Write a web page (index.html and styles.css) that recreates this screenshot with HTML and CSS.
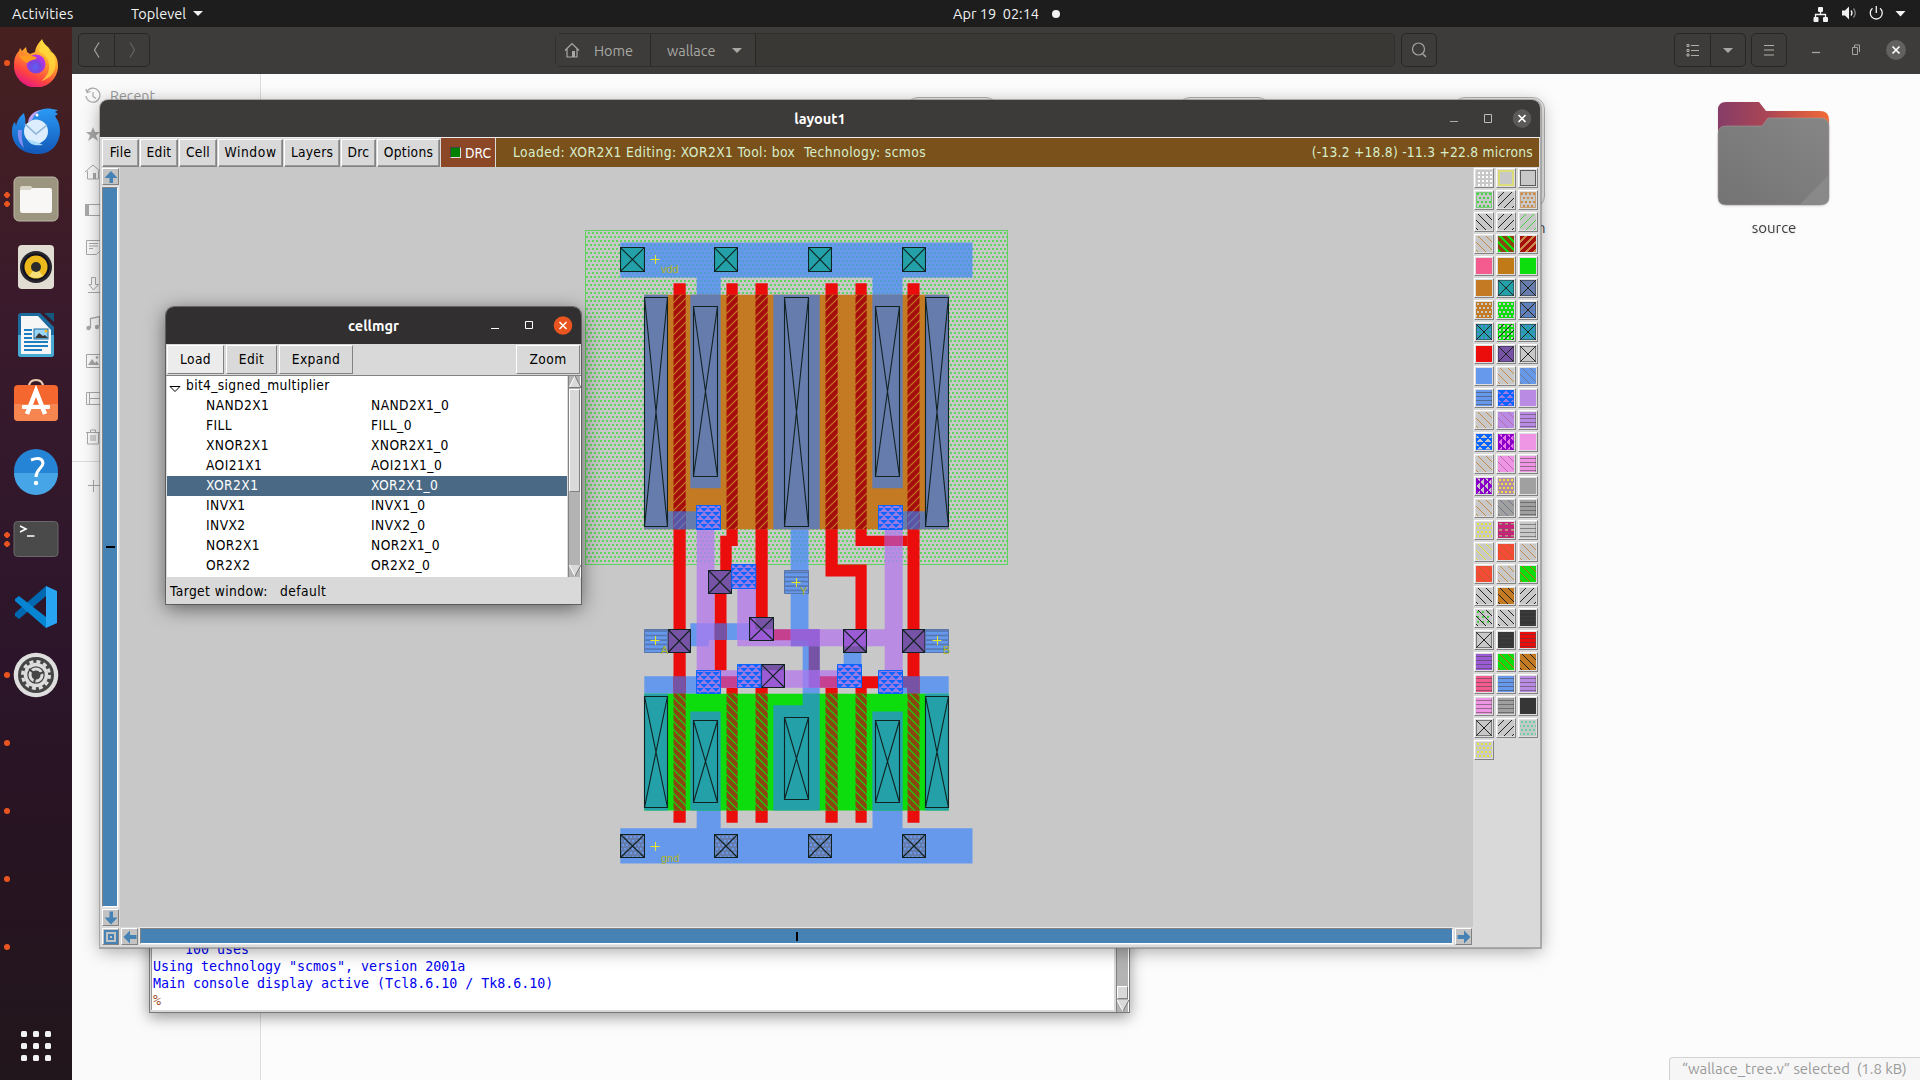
FILE: index.html
```html
<!DOCTYPE html>
<html lang="en">
<head>
<meta charset="utf-8">
<title>layout1</title>
<link rel="stylesheet" href="styles.css">
</head>
<body>
<div class="desktop">
  <header class="topbar">
    <div class="topbar-left"><span class="activities">Activities</span><span class="appmenu">Toplevel</span><i class="caret"></i></div>
    <div class="clock"><span>Apr 19&nbsp; 02:14</span><i></i></div>
    <svg class="tray" width="90" height="27" viewBox="1815 0 90 27">
      <g fill="#f2f2f2"><rect x="1818" y="7" width="5" height="5" rx="1"/><rect x="1813" y="17" width="5" height="5" rx="1" transform="translate(0.5 0)"/><rect x="1823" y="17" width="5" height="5" rx="1"/><path d="M1842 10.500h3l4-4v13l-4-4h-3z"/><path d="M1895.500 11h10l-5 5.500z"/></g>
      <path d="M1820.500 12v3M1815.500 18v-3.500h10v3.500M1851 10.500q2 2.500 0 5M1872.500 8.300a6 6 0 1 0 7.500 0M1876.300 6v7" fill="none" stroke="#f2f2f2" stroke-width="1.300"/>
      <path d="M1853.500 8.500q3.500 4.500 0 9" fill="none" stroke="#888" stroke-width="1.300"/>
    </svg>
  </header>

  <div class="workspace">
    <nav class="dock">
      <div class="dock-item"><b class="run"></b>
        <svg width="48" height="48" viewBox="0 0 48 48"><defs><linearGradient id="ff" x1=".8" y1="0" x2=".3" y2="1"><stop offset="0" stop-color="#fff04a"/><stop offset=".4" stop-color="#ffa02a"/><stop offset=".75" stop-color="#ff4540"/><stop offset="1" stop-color="#e31587"/></linearGradient><radialGradient id="fp" cx=".45" cy=".65"><stop offset="0" stop-color="#5b62f5"/><stop offset=".6" stop-color="#7a44dd"/><stop offset="1" stop-color="#b833e1"/></radialGradient></defs>
          <path d="M2 26c0-7 2-11 5-14l1-3 2 3 4-4 1 5 3 2 5-2c1-7 5-10 7-13 1 4 4 6 7 9l1 4 3 1c4 4 5 8 5 14a22 21.500 0 0 1-44-2z" fill="url(#ff)"/>
          <path d="M31 3c2 4 9 7 11 14 5 13-3 23-13 25 12-8 10-23 0-28-3-2-2-7 2-11z" fill="#ffdc3e" opacity=".75"/><circle cx="24" cy="25" r="9.500" fill="url(#fp)"/><path d="M7 15c3 3 8 1 11 2 4 0 8 1 6 3-5 2-7 1-8 4-4-1-8-4-9-9z" fill="#ff9a20"/></svg></div>
      <div class="dock-item">
        <svg width="48" height="48" viewBox="0 0 48 48"><defs><linearGradient id="tb" x1="0" y1="0" x2="0" y2="1"><stop offset="0" stop-color="#2b9af5"/><stop offset="1" stop-color="#1258b8"/></linearGradient></defs>
          <path d="M18 14C21 4 32 0 40 2l6 1-3 2 3 2-3 2c4 6 5 10 5 16-1 13-9 22-22 22C10 47 0 38 0 25c0-6 1-8 3-10l1 4c1-5 3-9 8-13 1 5 2 6 1 12z" fill="url(#tb)"/><path d="M16 15c1-7 7-12 14-12-6 2-8 6-10 10z" fill="#b9a1f5"/><path d="M6 23c-1 9 2 14 6 18-1-4-3-10-2-18z" fill="#7f8ef0"/><circle cx="25" cy="8" r="1.500" fill="#fff"/><circle cx="24" cy="24.500" r="12" fill="#dceefd"/><path d="M13 17l11 10 11-9" fill="none" stroke="#8ab0d8" stroke-width="1.500"/><path d="M15 32c3 6 8 7 16 6l-6-3z" fill="#a9dcfa"/></svg></div>
      <div class="dock-item"><b class="run two"></b>
        <svg width="48" height="48" viewBox="0 0 48 48"><rect x="2" y="2" width="44" height="44" rx="5" fill="#9c9680" stroke="#bdb8a6"/><path d="M8 13q0-2 2-2h9l3 4h17v6H8z" fill="#d8d4c7"/><rect x="8" y="15" width="32" height="23" rx="2.500" fill="#f8f7f5"/><path d="M8 20v-4q0-1 3-1h7l3-2h17q2 0 2 3" fill="#f8f7f5"/></svg></div>
      <div class="dock-item">
        <svg width="48" height="48" viewBox="0 0 48 48"><rect x="6" y="2" width="36" height="44" rx="4" fill="#e2ddd2"/><circle cx="24" cy="24" r="16" fill="#28272e"/><circle cx="24" cy="24" r="13.500" fill="#111020"/><circle cx="24" cy="24" r="11.500" fill="#ecb91c"/><path d="M24 24l-7 9q7 4 14 0z" fill="#f7df78"/><circle cx="24" cy="24" r="5" fill="#2c2c2c"/></svg></div>
      <div class="dock-item">
        <svg width="48" height="48" viewBox="0 0 48 48"><path d="M6 5q0-3 3-3h19l14 14v27q0 3-3 3H9q-3 0-3-3z" fill="#1c6b9f"/><path d="M6 24h36v19q0 3-3 3H9q-3 0-3-3z" fill="#48a9d5"/><path d="M32 2h10v9z" fill="#15587f"/><path d="M9 5h17l13 14v24H9z" fill="#f6f6f6"/><path d="M12 19h8M12 23h8M12 27h8M12 31h24M12 35h24M12 39h18" stroke="#1a7fc0" stroke-width="1.800"/><rect x="22" y="18" width="14" height="10" fill="#9ad5f5" stroke="#1c6b9f"/><path d="M23 27l4-5 4 3 2-1 3 3z" fill="#373737"/><circle cx="34" cy="20" r="1.500" fill="#f5b71c"/></svg></div>
      <div class="dock-item">
        <svg width="48" height="48" viewBox="0 0 48 48"><path d="M17 8q0-7 7-7t7 7" fill="none" stroke="#eccfb0" stroke-width="2"/><rect x="2" y="6" width="44" height="36" rx="4" fill="#f4672e"/><path d="M2 25h44v13q0 4-4 4H6q-4 0-4-4z" fill="#f6854f"/><path d="M15 35l9-23 9 23" fill="none" stroke="#fff" stroke-width="4.500"/><rect x="10" y="26" width="28" height="4" rx="1" fill="#fff"/></svg></div>
      <div class="dock-item">
        <svg width="48" height="48" viewBox="0 0 48 48"><circle cx="24" cy="24" r="22" fill="#2584d6"/><path d="M2 26a22 22 0 0 0 44 0z" fill="#45a5e6"/><path d="M19 13q11-4 12 3c0 5-7 6-7 14" fill="none" stroke="#fff" stroke-width="3"/><circle cx="24" cy="36" r="2.200" fill="#fff"/></svg></div>
      <div class="dock-item"><b class="run two"></b>
        <svg width="48" height="48" viewBox="0 0 48 48"><rect x="2" y="6.500" width="44" height="35" rx="3.500" fill="#4a4a4a" stroke="#686868"/><path d="M8 11l6 3-6 3M15 21h7.500" fill="none" stroke="#fff" stroke-width="1.600"/></svg></div>
      <div class="dock-item">
        <svg width="48" height="48" viewBox="0 0 48 48"><path d="M34 3l11 5v32l-11 5z" fill="#27a5f2"/><path d="M34 3v10L7 36l-4-3v-3z" fill="#0068b0"/><path d="M34 45V34L7 13l-4 3v2z" fill="#0785d2"/></svg></div>
      <div class="dock-item"><b class="run"></b>
        <svg width="48" height="48" viewBox="0 0 48 48"><circle cx="24" cy="24" r="22.300" fill="#dedede"/><circle cx="24" cy="24" r="18" fill="#454545"/><circle cx="24" cy="24" r="13.500" fill="none" stroke="#ddd" stroke-width="3" stroke-dasharray="4 3.070"/><circle cx="24" cy="24" r="10.500" fill="none" stroke="#ddd" stroke-width="3.500"/><circle cx="24" cy="24" r="6" fill="none" stroke="#ddd" stroke-width="3"/><path d="M24 24l-7-6M24 24l8-3M24 24l-2 8" stroke="#454545" stroke-width="2"/><circle cx="24" cy="24" r="4" fill="#454545"/></svg></div>
      <div class="dock-item"><b class="run"></b></div>
      <div class="dock-item"><b class="run"></b></div>
      <div class="dock-item"><b class="run"></b></div>
      <div class="dock-item"><b class="run"></b></div>
      <div class="apps"><i></i><i></i><i></i><i></i><i></i><i></i><i></i><i></i><i></i></div>
    </nav>

    <main class="files">
      <div class="files-head">
        <div class="btns"><span class="hb"><svg width="10" height="16"><path d="M7 0.500L2.500 8 7 15.500" fill="none" stroke="#a5a4a0" stroke-width="1.200"/></svg></span><span class="hb"><svg width="10" height="16"><path d="M3 0.500L7.500 8 3 15.500" fill="none" stroke="#64635f" stroke-width="1.200"/></svg></span></div>
        <div class="path">
          <span class="crumb home"><svg width="16" height="16"><path d="M1 8.500L8 1.500l7 7M3 7v8h10V7" fill="none" stroke="#a9a8a4" stroke-width="1.200"/><rect x="8" y="9" width="3" height="6" fill="#a9a8a4"/></svg>Home</span>
          <span class="crumb wal">wallace<i class="caret dim"></i></span>
        </div>
        <div class="btns search"><span class="hb"><svg width="16" height="16"><circle cx="7.500" cy="7" r="6" fill="none" stroke="#a5a4a0" stroke-width="1.200"/><path d="M12 12l3 3" stroke="#a5a4a0" stroke-width="1.500"/></svg></span></div>
        <div class="btns list"><span class="hb"><svg width="14" height="14"><path d="M5 2.500h8M5 7.500h8M5 12.500h8" stroke="#b0afab" stroke-width="1.200"/><path d="M1 1.500h2v2H1zM1 6.500h2v2H1zM1 11h2v2H1z" fill="none" stroke="#b0afab"/></svg></span><span class="hb"><i class="caret dim"></i></span></div>
        <div class="btns menu"><span class="hb"><svg width="12" height="12"><path d="M1 1.500h10M1 6h10M1 11h10" stroke="#b0afab" stroke-width="1.200"/></svg></span></div>
        <div class="wc"><svg width="104" height="24" viewBox="0 0 104 24"><path d="M6 14.500h8" stroke="#a5a4a0" stroke-width="1.300"/><path d="M46.500 9.500h5v7h-5zM48.500 9V7h5v7" fill="none" stroke="#a5a4a0"/><circle cx="90" cy="12" r="10" fill="#62615f"/><path d="M86.500 8.500l7 7M93.500 8.500l-7 7" stroke="#fff" stroke-width="1.700"/></svg></div>
      </div>
      <div class="files-body">
        <aside class="side">
          <div class="place"><svg width="18" height="18"><path d="M3 4.500A7 7 0 1 1 2 9M2 2l1 3.500 3.500-1M9 5v4.500l3 2" fill="none" stroke="#a8a8a8" stroke-width="1.200"/></svg><span>Recent</span></div>
          <div class="place"><svg width="18" height="18"><path d="M9 2l2 5h5l-4 3.500L14 16l-5-3.500L4 16l2-5.500L2 7h5z" fill="#a8a8a8"/></svg></div>
          <div class="place"><svg width="18" height="18"><path d="M1 9l8-7 8 7M3.500 8v8h11V8" fill="none" stroke="#a8a8a8"/><rect x="9" y="10" width="3" height="6" fill="#a8a8a8"/></svg></div>
          <div class="place"><svg width="18" height="18"><path d="M1.500 3.500h16v11h-16z" fill="none" stroke="#a8a8a8"/><path d="M1 3h4v12H1z" fill="#a8a8a8"/></svg></div>
          <div class="place"><svg width="18" height="18"><path d="M2.500 1.500h14v10l-4 4h-10zM5 4.500h9M5 7h9M5 9.500h4" fill="none" stroke="#a8a8a8"/></svg></div>
          <div class="place"><svg width="18" height="18"><path d="M7.500 1.500h4v7h3L9.500 14 5 8.500h2.500zM4 16.500h12" fill="none" stroke="#a8a8a8"/></svg></div>
          <div class="place"><svg width="18" height="18"><path d="M6.500 14V4.500l9-2V12" fill="none" stroke="#a8a8a8" stroke-width="1.300"/><circle cx="4.500" cy="14" r="2.200" fill="#a8a8a8"/><circle cx="13" cy="13" r="2.200" fill="#a8a8a8"/></svg></div>
          <div class="place"><svg width="18" height="18"><path d="M2.500 2.500h15v13h-15z" fill="none" stroke="#a8a8a8"/><path d="M4 13l4-6 3 4 2-2 2 4z" fill="#a8a8a8"/><circle cx="13" cy="5.500" r="1.300" fill="#a8a8a8"/></svg></div>
          <div class="place"><svg width="18" height="18"><path d="M2.500 2.500h15v12h-15zM5.500 2v13M5 8.500h12" fill="none" stroke="#a8a8a8"/></svg></div>
          <div class="place"><svg width="18" height="18"><path d="M2 4.500h14M6.500 4V2h5v2M3.500 5v11h11V5M7 7v6M9 7v6M11 7v6" fill="none" stroke="#a8a8a8"/></svg></div>
          <div class="place other"><svg width="18" height="18"><path d="M4 9.500h12M9.500 4v12" stroke="#a8a8a8"/></svg></div>
        </aside>
        <section class="grid">
          <i class="thumb t1"></i><i class="thumb t2"></i><i class="thumb t3"></i><span class="hname">h</span>
          <figure class="folder">
            <svg width="114" height="108" viewBox="0 0 114 108"><defs><linearGradient id="fo"><stop offset="0" stop-color="#863d68"/><stop offset=".45" stop-color="#ab4554"/><stop offset="1" stop-color="#f26a36"/></linearGradient><linearGradient id="fg" x1="0" y1="1" x2="1" y2="0"><stop offset="0" stop-color="#737373"/><stop offset="1" stop-color="#868686"/></linearGradient></defs>
              <path d="M1 9q0-8 8-8h33l7 9h54q9 0 9 9v40H1z" fill="url(#fo)"/><path d="M1 33q0-8 8-8h36l6-8h52q9 0 9 8v71q0 8-9 8H9q-8 0-8-8z" fill="url(#fg)" stroke="#a59a99" stroke-width=".600"/><path d="M83 103.500l29-30v22q0 8-9 8z" fill="#898989"/></svg>
            <figcaption>source</figcaption>
          </figure>
          <div class="status">“wallace_tree.v” selected&nbsp; (1.8 kB)</div>
        </section>
      </div>
    </main>
  </div>

  <div class="win console">
    <pre>    100 uses
Using technology "scmos", version 2001a
Main console display active (Tcl8.6.10 / Tk8.6.10)
<em>%</em></pre>
    <div class="tk-scroll"><span class="grow"></span><span class="knob"></span><svg width="12" height="12"><path d="M0 0h12L6 11.500z" fill="#d9d9d9"/><path d="M0 0l6 11" stroke="#fff"/><path d="M12 0L6 11" stroke="#777"/></svg></div>
  </div>

  <div class="win layout">
    <div class="title"><span>layout1</span><svg width="90" height="24" viewBox="0 0 90 24"><path d="M0 14.500h8" stroke="#aaa"/><path d="M34.500 7.500h7v8h-7z" fill="none" stroke="#bbb"/><circle cx="72" cy="11.500" r="9.300" fill="#5b5a58"/><path d="M68.500 8l7 7M75.500 8l-7 7" stroke="#fff" stroke-width="1.700"/></svg></div>
    <div class="menubar">
      <span class="mb w37">File</span><span class="mb w38">Edit</span><span class="mb w38">Cell</span><span class="mb w65">Window</span><span class="mb w56">Layers</span><span class="mb w35">Drc</span><span class="mb w63">Options</span>
      <span class="drc"><i></i>DRC</span>
      <span class="info"><span>Loaded: XOR2X1 Editing: XOR2X1 Tool: box&nbsp; Technology: scmos</span><span class="coords">(-13.2 +18.8) -11.3 +22.8 microns</span></span>
    </div>
    <div class="work">
      <div class="view">
        <div class="vbar">
          <span class="ab"><svg width="14" height="14"><path d="M7 1l6.500 7H9v5H5.500V8H.5z" fill="#4682b4"/></svg></span>
          <span class="trough v"><i></i></span>
          <span class="ab"><svg width="14" height="14"><path d="M7 13.500l6.500-7H9V.5H5.500v6H.5z" fill="#4682b4"/></svg></span>
        </div>
        <svg class="canvas" width="1353" height="760" viewBox="120 167 1353 760">
          <defs>
            <pattern id="well" width="4" height="8" patternUnits="userSpaceOnUse"><path d="M0 0h2v2H0zM2 4h2v2H2z" fill="#5fd35f"/></pattern>
            <pattern id="wellb" width="4" height="8" patternUnits="userSpaceOnUse"><path d="M0 0h2v2H0zM2 4h2v2H2z" fill="#45a0b8" opacity=".6"/></pattern>
            <pattern id="dotb" width="4" height="8" patternUnits="userSpaceOnUse"><path d="M0 0h2v2H0zM2 4h2v2H2z" fill="#6699eb"/></pattern>
            <pattern id="hp" width="8" height="8" patternUnits="userSpaceOnUse"><rect width="8" height="8" fill="#a60d0d"/><path d="M-2 2l4-4M0 8l8-8M6 10l4-4" stroke="#c47a22" stroke-width="1.200"/></pattern>
            <pattern id="hn" width="8" height="8" patternUnits="userSpaceOnUse"><rect width="8" height="8" fill="#8a4510"/><path d="M-2 6l4 4M0 0l8 8M6-2l4 4" stroke="#0ddd0d" stroke-width="1.200"/></pattern>
            <pattern id="hm" width="8" height="8" patternUnits="userSpaceOnUse"><path d="M-2 2l4-4M0 8l8-8M6 10l4-4" stroke="#6a7cac" stroke-width="1.200"/></pattern>
            <pattern id="via" width="8" height="8" patternUnits="userSpaceOnUse"><rect width="8" height="8" fill="#9a7be6"/><path d="M.3 0h7.400L4 3.800zM4.300 4h7.400L8 7.800zM-3.700 4h7.400L0 7.800z" fill="#0a64ff"/></pattern>
            <pattern id="hl" width="10" height="4.500" patternUnits="userSpaceOnUse"><path d="M0 1h10" stroke="#4a5f8c" stroke-width="1"/></pattern>
            <symbol id="cx" viewBox="0 0 24 24" preserveAspectRatio="none"><path d="M.5.5h23v23H.5zM.5.5l23 23M23.500.5l-23 23" fill="none" stroke="#122" stroke-width="1.100" vector-effect="non-scaling-stroke"/></symbol>
          </defs>
          <rect x="585.500" y="230.500" width="422" height="334" fill="url(#well)" stroke="#5fd35f"/>
          <g fill="#6699eb">
            <path d="M620.300 242.500h352.200v35h-70v18h-30v-18h-151.800v18h-24v-18h-76.400z"/>
            <path d="M620.300 863.500h352.200v-35.200h-70v-18.300h-30v18.300h-151.800v-18.300h-24v18.300h-76.400z"/>
            <path d="M790.700 529h17.800v100.500h11.200v64.500h-17v-48h-12z"/>
            <path d="M690.300 623.300h60v16.700h-41.500v6.300h-18.500zM843.700 652h17.800v13h-17.800zM644.300 676.300h52v17.400h-52zM902.700 676.300h46v17.400h-46z"/>
          </g>
          <g fill="url(#wellb)"><path d="M620.300 242.500h352.200v35h-70v18h-30v-18h-151.800v18h-24v-18h-76.400z"/><path d="M790.700 529h17.800v35h-17.800z"/></g>
          <g fill="#eb0c0c">
            <path d="M673.500 283.300h12.200v411h-12.200zM726.500 283.300h11.200v12h-11.200zM755.500 283.300h12.200v12h-12.200zM825.500 283.300h12.200v12h-12.200zM855.500 283.300h11.200v12h-11.200zM907.500 283.300h12v411h-12z"/>
            <path d="M726.500 529h11.200v17h-6v32h-11.400v-42.300h6.200zM714.500 590h12v86h11.200v18h-11.200v-6h-12zM755.500 529h12.200v90h-12.200zM755.500 687h12.200v7h-12.200z"/>
            <path d="M825.500 529h12.200v35.500h29v66h-11.200v-54h-30zM855.500 529h11.200v6.700h41v10.300h-52.200zM825.500 687h12.200v7h-12.200zM855.500 687h11.200v7h-11.200zM860 676.300h19v12h-19z"/>
            <path d="M673.500 810h12.200v12.700h-12.200zM726.500 810h11.200v12.700h-11.200zM755.500 810h12.200v12.700h-12.200zM825.500 810h12.200v12.700h-12.200zM855.500 810h11.200v12.700h-11.200zM907.500 810h12v12.700h-12z"/>
          </g>
          <g fill="#b98be3">
            <path d="M696.700 529h17.800v142h-17.800zM884.700 529h18v142h-18zM737.300 588h18.400v41.300h129v17h-147.400zM720 670.300h117.700v17.400h-117.700z"/>
          </g>
          <g fill="url(#wellb)" opacity=".35"><path d="M696.700 529h17.800v35h-17.800zM884.700 529h18v35h-18z"/></g>
          <g fill="#9680ee"><path d="M696.700 623.300h17.800v16.700h-5.700v6.300h-12.100zM737.300 623.300h18v16.700h-18zM802.700 670.300h17v17.400h-17z" opacity=".9"/></g>
          <path d="M790.700 629.300h29v17h-29z" fill="#8c6bdc"/>
          <g fill="#c64090"><path d="M773.700 629.300h17v11h-17zM720 676.300h18v11.400h-18zM819.700 676.300h18v11.400h-18zM884.700 535.700h18v10.300h-18z"/></g>
          <g fill="#7753a5"><path d="M714.500 623.300h12v16.700h-12zM808.700 646.300h11v24h-11zM673.500 676.300h12.200v17.400h-12.200zM902.700 676.300h16.800v17.400h-12v-6h-4.800z"/></g>
          <path d="M790.700 629.300h29v17h-11v-6h-18zM808.700 670.300h11v17.400h-11z" fill="#9a5bd4" opacity=".7"/>
          <!-- p diffusion and its transistors -->
          <path d="M644.300 294.700h304.400v234.600h-304.400z" fill="#c47a22"/>
          <path d="M644.300 294.700h23.400v216.600h29v18h-52.400zM690.300 294.700h30.400v193.600h-30.400zM773.300 294.700h46.400v234.600h-46.400zM872.300 294.700h30.400v193.600h-30.400zM925.300 294.700h23.400v234.600h-46v-18h22.600z" fill="#667cac"/>
          <path d="M673.500 294.700h12.200v234.600h-12.200zM726.500 294.700h11.200v234.600h-11.200zM755.500 294.700h12.200v234.600h-12.200zM825.500 294.700h12.200v234.600h-12.200zM855.500 294.700h11.200v234.600h-11.200zM907.500 294.700h12v234.600h-12z" fill="url(#hp)"/>
          <g fill="#5b54a6"><path d="M673.500 511.300h12.200v18h-12.200zM907.500 511.300h12v18h-12z"/></g>
          <g fill="url(#hm)"><path d="M673.500 511.300h12.200v18h-12.200zM907.500 511.300h12v18h-12z"/></g>
          <g fill="none" stroke="#122" stroke-width="1.100">
            <path d="M644.500 297.500h23v229h-23zl23 229m0-229l-23 229M784.500 297.500h24v229h-24zl24 229m0-229l-24 229M925.500 297.500h23v229h-23zl23 229m0-229l-23 229"/>
            <path d="M693.500 306.500h24v170h-24zl24 170m0-170l-24 170M875.500 306.500h24v170h-24zl24 170m0-170l-24 170"/>
          </g>
          <!-- n diffusion and its transistors -->
          <path d="M644.300 693.700h304.400v116.800h-304.400z" fill="#0ddd0d"/>
          <path d="M644.300 693.700h23.400v116.800h-23.400zM690.300 711.500h30.400v99h-30.400zM773.300 705.300h29.400v-11.600h17v116.800h-46.400zM872.300 711.500h30.400v99h-30.400zM925.300 693.700h23.400v116.800h-23.400z" fill="#23a0a8"/>
          <path d="M673.500 693.700h12.200v116.800h-12.200zM726.500 693.700h11.200v116.800h-11.200zM755.500 693.700h12.200v116.800h-12.200zM825.500 693.700h12.200v116.800h-12.200zM855.500 693.700h11.200v116.800h-11.200zM907.500 693.700h12v116.800h-12z" fill="url(#hn)"/>
          <g fill="none" stroke="#122" stroke-width="1.100">
            <path d="M644.500 696.500h23v111h-23zl23 111m0-111l-23 111M925.500 696.500h23v111h-23zl23 111m0-111l-23 111"/>
            <path d="M693.500 720.500h24v82h-24zl24 82m0-82l-24 82M875.500 720.500h24v82h-24zl24 82m0-82l-24 82M784.500 717.500h24v82h-24zl24 82m0-82l-24 82"/>
          </g>
          <!-- substrate and well taps -->
          <path d="M620.300 247.300h24.400v24.400h-24.400zM714 247.300h24v24.400h-24zM808.300 247.300h23.700v24.400h-23.700zM902.300 247.300h23.700v24.400h-23.700z" fill="#23a0a8"/>
          <use href="#cx" x="620" y="247" width="25" height="25"/><use href="#cx" x="714" y="247" width="24" height="25"/><use href="#cx" x="808" y="247" width="24" height="25"/><use href="#cx" x="902" y="247" width="24" height="25"/>
          <path d="M620.300 834.300h24.400v23.400h-24.400zM714 834.300h24v23.400h-24zM808.300 834.300h23.700v23.400h-23.700zM902.300 834.300h23.700v23.400h-23.700z" fill="#667cac"/>
          <path d="M620.300 834.300h24.400v23.400h-24.400zM714 834.300h24v23.400h-24zM808.300 834.300h23.700v23.400h-23.700zM902.300 834.300h23.700v23.400h-23.700z" fill="url(#dotb)"/>
          <use href="#cx" x="620" y="834" width="25" height="24"/><use href="#cx" x="714" y="834" width="24" height="24"/><use href="#cx" x="808" y="834" width="24" height="24"/><use href="#cx" x="902" y="834" width="24" height="24"/>
          <!-- poly contacts -->
          <path d="M708 570h24v24h-24zM749 617h25v24h-25zM667.500 629h23.500v24h-23.500zM843 629h24v24h-24zM902 629h23.500v24h-23.500zM761 664h24v24h-24z" fill="#7753a5"/>
          <path d="M749 629.300h25v11.700h-25zM749 617h6.500v13h-6.500zM843 629h24v17.300h-24zM761 670.300h24v17.700h-24z" fill="#9a5bd4"/>
          <use href="#cx" x="708" y="570" width="24" height="24"/><use href="#cx" x="749" y="617" width="25" height="24"/><use href="#cx" x="667.500" y="629" width="23.500" height="24"/><use href="#cx" x="843" y="629" width="24" height="24"/><use href="#cx" x="902" y="629" width="23.500" height="24"/><use href="#cx" x="761" y="664" width="24" height="24"/>
          <!-- pins -->
          <path d="M644.500 629.500h23v23h-23zM925.500 629.500h23v23h-23zM784.500 570.500h24v23h-24z" fill="#6699eb"/>
          <path d="M644.500 629.500h23v23h-23zM925.500 629.500h23v23h-23zM784.500 570.500h24v23h-24z" fill="url(#hl)" stroke="#5a75a8"/>
          <!-- vias -->
          <path d="M696.500 505.500h24v24h-24zM878.500 505.500h24v24h-24zM731.700 564.500h24v24h-24zM696.500 670.500h24v23h-24zM737.500 664.500h23.500v23h-23.500zM837.500 664.500h24v23h-24zM878.500 670.500h24v23h-24z" fill="url(#via)" stroke="#0a64ff"/>
          <path d="M650.500 259.500h9M655.500 255v9M650.500 846.500h9M655.500 842v9M650.500 640.500h9M655.500 636v9M932.500 640.500h9M937.500 636v9M791.500 582.500h9M796.500 578v9" stroke="#e8e82a"/>
          <g class="lbl"><text x="661" y="273">vdd</text><text x="661" y="862">gnd</text><text x="661" y="654">A</text><text x="943" y="654">B</text><text x="800" y="595">Y</text></g>
        </svg>
        <span class="ab zc"><svg width="14" height="14"><path d="M1 1h12v12H1zM5 5h4v4H5z" fill="none" stroke="#4682b4" stroke-width="2"/></svg></span>
        <div class="hbar">
          <span class="ab"><svg width="14" height="14"><path d="M.5 7L7 .5V5h6.500v4H7v4.500z" fill="#4682b4"/></svg></span>
          <span class="trough h"><i></i></span>
          <span class="ab"><svg width="14" height="14"><path d="M13.500 7L7 .5V5H.5v4H7v4.500z" fill="#4682b4"/></svg></span>
        </div>
      </div>
      <div class="palette">
        <i class="dots white"></i><i class="box yel"></i><i class="box blk"></i>
        <i class="dots box grn"></i><i class="fs blk"></i><i class="dots box ora"></i>
        <i class="bs blk"></i><i class="fs blk"></i><i class="fs grn"></i>
        <i class="bs ora"></i><i class="bs thick lime on-brown"></i><i class="fs thick ora on-dred"></i>
        <i class="on-pink"></i><i class="on-gold"></i><i class="on-green"></i>
        <i class="on-orange"></i><i class="x on-teal"></i><i class="x on-slate"></i>
        <i class="dots gry on-orange"></i><i class="dots gry on-green"></i><i class="xd on-slate"></i>
        <i class="xd on-teal"></i><i class="dfs on-green"></i><i class="xd on-teal"></i>
        <i class="on-red"></i><i class="x on-purple"></i><i class="x"></i>
        <i class="on-blue"></i><i class="bs ora"></i><i class="bs dim on-blue"></i>
        <i class="hl on-blue"></i><i class="tri on-violet"></i><i class="on-lilac"></i>
        <i class="bs ora"></i><i class="bs mag on-lilac"></i><i class="hl on-lilac"></i>
        <i class="tri"></i><i class="vtri on-magenta"></i><i class="on-orchid"></i>
        <i class="bs ora"></i><i class="bs mag on-orchid"></i><i class="hl on-orchid"></i>
        <i class="vtri"></i><i class="dots yel on-mauve"></i><i class="on-grey"></i>
        <i class="bs ora"></i><i class="bs dim on-grey"></i><i class="hl on-grey"></i>
        <i class="dots yel"></i><i class="brick on-crimson"></i><i class="hl"></i>
        <i class="bs yel"></i><i class="bs rust on-tomato"></i><i class="bs ora"></i>
        <i class="bs rust on-tomato"></i><i class="bs ora"></i><i class="bs rust on-green"></i>
        <i class="bs blk"></i><i class="bs blk on-orange"></i><i class="fs blk"></i>
        <i class="dbs"></i><i class="bs blk"></i><i class="hl on-black"></i>
        <i class="x"></i><i class="hl on-black"></i><i class="hl on-red"></i>
        <i class="hl on-amethyst"></i><i class="bs rust on-green"></i><i class="bs blk on-orange"></i>
        <i class="hl on-pink"></i><i class="hl on-blue"></i><i class="hl on-lilac"></i>
        <i class="hl on-orchid"></i><i class="hl on-grey"></i><i class="on-black"></i>
        <i class="x"></i><i class="fs blk"></i><i class="dots aqua"></i>
        <i class="dots yel"></i>
      </div>
    </div>
  </div>

  <div class="win cellmgr">
    <div class="title"><span>cellmgr</span><svg width="90" height="24" viewBox="0 0 90 24"><path d="M0 14.500h8" stroke="#fff"/><path d="M34.500 7.500h7v7h-7z" fill="none" stroke="#fff"/><circle cx="72" cy="11.500" r="9.300" fill="#e95420"/><path d="M68.500 8l7 7M75.500 8l-7 7" stroke="#fff" stroke-width="1.500"/></svg></div>
    <div class="tools"><span class="tb w57 hot">Load</span><span class="tb w51">Edit</span><span class="tb w74">Expand</span><span class="tb w64 last">Zoom</span></div>
    <div class="tree">
      <div class="rows">
        <div class="row root"><svg width="12" height="8"><path d="M1 1.500h10L6 6.500z" fill="none" stroke="#000"/></svg>bit4_signed_multiplier</div>
        <div class="row"><span>NAND2X1</span><span>NAND2X1_0</span></div>
        <div class="row"><span>FILL</span><span>FILL_0</span></div>
        <div class="row"><span>XNOR2X1</span><span>XNOR2X1_0</span></div>
        <div class="row"><span>AOI21X1</span><span>AOI21X1_0</span></div>
        <div class="row sel"><span>XOR2X1</span><span>XOR2X1_0</span></div>
        <div class="row"><span>INVX1</span><span>INVX1_0</span></div>
        <div class="row"><span>INVX2</span><span>INVX2_0</span></div>
        <div class="row"><span>NOR2X1</span><span>NOR2X1_0</span></div>
        <div class="row"><span>OR2X2</span><span>OR2X2_0</span></div>
      </div>
      <div class="tk-scroll"><svg width="12" height="12"><path d="M0 11.500h12L6 0z" fill="#d9d9d9"/><path d="M0 12L6 0" stroke="#fff"/><path d="M0 11.500h12L6 0" fill="none" stroke="#777"/></svg><span class="knob long"></span><span class="grow"></span><svg width="12" height="12"><path d="M0 0h12L6 11.500z" fill="#d9d9d9"/><path d="M0 0l6 11" stroke="#fff"/><path d="M12 0L6 11" stroke="#777"/></svg></div>
    </div>
    <div class="target"><span>Target window:</span><span>default</span></div>
  </div>
</div>
</body>
</html>
```
FILE: styles.css
```css
* { box-sizing: border-box; }
body { margin: 0; font-family: Ubuntu, "Noto Sans", sans-serif; }
svg { display: block; flex: none; }
.desktop { position: relative; width: 1920px; height: 1080px; overflow: hidden; display: flex; flex-direction: column; background: #fcfcfc; }

.topbar { height: 27px; flex: none; background: #1d1d1d; color: #f2f2f2; display: grid; grid-template-columns: 1fr auto 1fr; align-items: center; font-size: 14.500px; line-height: 26px; }
.topbar-left { display: flex; align-items: center; padding-left: 12px; }
.activities { width: 119px; letter-spacing: 0.200px; }
.appmenu { width: 62px; }
.caret { width: 0; height: 0; border: 5px solid transparent; border-top-color: #f2f2f2; border-bottom: 0; }
.caret.dim { border-top-color: #a9a8a4; }
.clock { display: flex; align-items: center; gap: 13px; width: 108px; white-space: nowrap; transform: translateX(47px); }
.clock i { width: 8px; height: 8px; border-radius: 50%; background: #f2f2f2; }
.tray { justify-self: end; margin-right: 15px; overflow: visible; }

.workspace { flex: 1; display: flex; min-height: 0; }
.dock { width: 72px; flex: none; display: flex; flex-direction: column; padding-top: 2px; background: linear-gradient(#47201f, #391a2c 28%, #2c152a 60%, #25141f 85%, #21161b); }
.dock-item { height: 68px; display: flex; align-items: center; padding-left: 4px; flex: none; }
.run { width: 6px; height: 6px; border-radius: 50%; background: #e95420; margin-right: 2px; }
.dock-item > svg { margin-left: auto; margin-right: 12px; }
.run.two { height: 15px; border-radius: 0; background: radial-gradient(circle 3px at 3px 3px, #e95420 90%, transparent) 0 0 / 6px 6px no-repeat, radial-gradient(circle 3px at 3px 3px, #e95420 90%, transparent) 0 9px / 6px 6px no-repeat; }
.apps { margin: auto auto 19px 21px; display: grid; grid-template-columns: repeat(3, 6px); gap: 6px; }
.apps i { height: 6px; border-radius: 1.500px; background: #f2f2f2; }

.files { flex: 1; display: flex; flex-direction: column; }
.files-head { height: 47px; flex: none; background: #3d3c3a; display: flex; align-items: center; padding: 0 6px 1px 6px; color: #a9a8a4; font-size: 14.500px; }
.btns { display: flex; border: 1px solid #282725; border-radius: 5px; height: 34px; }
.hb { width: 35px; display: flex; align-items: center; justify-content: center; }
.hb + .hb { border-left: 1px solid #282725; }
.path { margin-left: 405px; width: 840px; height: 34px; display: flex; border: 1px solid #302f2d; border-radius: 5px; background: #393835; }
.crumb { display: flex; align-items: center; border-right: 1px solid #282725; background: #3d3c3a; }
.crumb.home { width: 95px; padding-left: 8px; gap: 14px; }
.crumb.wal { width: 105px; padding-left: 16px; gap: 17px; }
.search { margin-left: 6px; }
.search .hb { width: 34px; }
.list { margin-left: 237px; }
.menu { margin-left: 5px; }
.menu .hb { width: 34px; }
.wc { margin-left: 19px; }
.files-body { flex: 1; display: flex; }
.side { width: 189px; border-right: 1px solid #dcdcdc; background: #fafafa; padding: 3px 0 0 12px; color: #9a9a9a; font-size: 14.300px; }
.place { height: 37.900px; display: flex; align-items: center; gap: 8px; }
.place.other { border-top: 1px solid #dcdcdc; margin: 5px 0 0 -12px; padding-left: 12px; height: 48px; }
.grid { flex: 1; position: relative; background: #fcfcfc; }
.thumb { position: absolute; top: 23px; width: 92px; height: 111px; border: 1px solid #b5b5b5; border-radius: 12px; box-shadow: inset 0 0 0 2px #eee; }
.t1 { left: 645px; }
.t2 { left: 917px; }
.t3 { left: 1192px; }
.hname { position: absolute; left: 1276px; top: 145px; font-size: 15px; color: #444; }
.folder { position: absolute; left: 1456px; top: 27px; margin: 0; display: flex; flex-direction: column; align-items: center; gap: 10px; font-size: 15px; color: #3d3d3d; filter: drop-shadow(0 1px 1px rgba(0, 0, 0, .12)); }
.status { position: absolute; right: 0; bottom: 0; width: 251px; height: 23px; border: 1px solid #d2d2d2; border-right: 0; border-bottom: 0; border-radius: 4px 0 0; background: #f6f6f6; padding-left: 12px; font-size: 14.900px; line-height: 22px; color: #9a9a9a; white-space: nowrap; }

/* Tk windows */
.win { position: absolute; font-family: "DejaVu Sans Condensed", "DejaVu Sans", sans-serif; font-stretch: condensed; font-size: 13.700px; letter-spacing: 0.420px; color: #000; background: #d9d9d9; display: flex; flex-direction: column; }
.title { height: 37px; flex: none; background: #3d3b3a; color: #fff; font: bold 14.500px Ubuntu, "Noto Sans", sans-serif; letter-spacing: 0; display: grid; grid-template-columns: 90px 1fr 90px; align-items: center; border-radius: 8px 8px 0 0; text-align: center; }
.title svg { overflow: visible; }
.title span { grid-column: 2; }

.console { left: 149px; top: 760px; width: 981px; height: 253px; border: 1px solid #777; border-top: 0; box-shadow: 0 4px 14px rgba(0, 0, 0, .4); flex-direction: row; }
.console pre { margin: 0 2px 2px 1px; flex: 1; background: #fff; border-left: 1px solid #999; padding: 181px 0 0 1px; font: 13.330px/17px "DejaVu Sans Mono", monospace; letter-spacing: -0.020px; color: #0000f0; }
.console em { font-style: normal; color: #a0522d; }
.tk-scroll { width: 13px; flex: none; background: #b3b3b3; border-left: 1px solid #828282; border-right: 1px solid #fff; display: flex; flex-direction: column; gap: 1px; }
.grow { flex: 1; }
.knob { height: 13px; background: #d9d9d9; border: 1px solid; border-color: #fff #828282 #828282 #fff; }
.knob.long { height: 103px; }

.layout { left: 100px; top: 100px; width: 1441px; height: 848px; border-radius: 8px 8px 0 0; border-right: 1px solid #aaa; border-bottom: 1px solid #aaa; box-shadow: 0 0 0 1px rgba(120, 120, 120, .5), 0 3px 18px rgba(0, 0, 0, .35); }
.menubar { height: 30px; flex: none; border-top: 1px solid #eee; display: flex; padding: 1px 1px 0 2px; white-space: nowrap; }
.mb { height: 28px; margin-right: 1px; border: 1px solid; border-color: #fff #828282 #828282 #fff; box-shadow: inset -1px -1px #999; text-align: center; line-height: 25px; letter-spacing: 0.250px; }
.w35 { width: 35px; } .w37 { width: 37px; } .w38 { width: 38px; } .w56 { width: 56px; } .w63 { width: 63px; } .w65 { width: 65px; letter-spacing: 0.600px; }
.drc { width: 55px; margin-top: -1px; background: #8b4726; color: #fff; display: flex; align-items: center; gap: 4px; padding-left: 9px; border-right: 1px solid #d9d9d9; letter-spacing: 0.100px; }
.drc i { width: 11px; height: 11px; background: #008000; border: 1px solid; border-color: #444 #ddd #ddd #444; }
.info { flex: 1; margin-top: -1px; background: #7a511b; color: #d8eecb; display: flex; justify-content: space-between; align-items: center; padding: 0 6px 1px 17px; }
.coords { letter-spacing: 0.250px; }
.work { flex: 1; display: flex; }
.view { width: 1373px; display: grid; grid-template-columns: 20px 1353px; grid-template-rows: 760px 20px; }
.vbar { display: flex; flex-direction: column; padding: 1px 1px 1px 2px; gap: 2px; }
.ab { width: 17px; height: 17px; flex: none; background: #c3c3c3; border: 1px solid; border-color: #fff #828282 #828282 #fff; display: flex; align-items: center; justify-content: center; }
.ab svg { width: 14px; height: 14px; }
.zc { margin: 1px 0 0 2px; }
.trough { background: #4682b4; border: 1px solid; border-color: #828282 #fff #fff #828282; outline: 1px solid #e8e8e8; display: flex; align-items: center; justify-content: center; flex: 1; }
.trough.v { margin-right: 1px; }
.trough.v i { width: 9px; height: 2px; background: #000; }
.trough.h i { width: 2px; height: 9px; background: #000; }
.trough.h { height: 16px; }
.hbar { display: flex; padding: 1px 1px 0 1px; gap: 2px; }
.canvas { background: #c8c8c8; }
.lbl { font: 11px "Liberation Sans", sans-serif; letter-spacing: 0; fill: #b4b41c; }

.palette { display: grid; grid-template-columns: repeat(3, 20px); grid-auto-rows: 20px; gap: 2px; align-content: start; padding: 1px 0 0 1px; }
.palette i { --c: #333; --b: #c8c8c8; --g: linear-gradient(transparent, transparent); background: var(--g), var(--b); border: 1px solid; border-color: #fff #828282 #828282 #fff; box-shadow: inset 0 0 0 1px #dedede; }
.palette .white { --c: #fff; } .palette .yel { --c: #e6e637; } .palette .grn { --c: #4bd04b; } .palette .ora { --c: #c98a48; }
.palette .blk { --c: #222; } .palette .lime { --c: #0ddd0d; } .palette .gry { --c: #c8c8c8; } .palette .dim { --c: #6f7788; }
.palette .mag { --c: #b66bb0; } .palette .rust { --c: #c4601c; } .palette .aqua { --c: #5fd3a8; }
.palette .on-brown { --b: #8a4510; } .palette .on-dred { --b: #a60d0d; } .palette .on-pink { --b: #f45b8f; } .palette .on-gold { --b: #c17a18; }
.palette .on-green { --b: #0ddd0d; } .palette .on-orange { --b: #c47a22; } .palette .on-teal { --b: #23a0a8; } .palette .on-slate { --b: #667cac; }
.palette .on-red { --b: #eb0c0c; } .palette .on-purple { --b: #7753a5; } .palette .on-blue { --b: #6699eb; } .palette .on-violet { --b: #9a7be6; }
.palette .on-lilac { --b: #b98be3; } .palette .on-magenta { --b: #e878e8; } .palette .on-orchid { --b: #ee96e3; } .palette .on-mauve { --b: #b48ba8; }
.palette .on-grey { --b: #a0a0a0; } .palette .on-crimson { --b: #cc1f78; } .palette .on-tomato { --b: #f44a38; } .palette .on-black { --b: #363636; } .palette .on-amethyst { --b: #9a5bd4; }
.palette .box { box-shadow: inset 0 0 0 1px #dedede, inset 0 0 0 2px color-mix(in srgb, var(--c) 65%, #c8c8c8); }
.palette .box.yel { box-shadow: inset 0 0 0 1px #dedede, inset 0 0 0 3px #dcdc78; }
.palette .fs { --g: repeating-linear-gradient(-45deg, transparent 0 2.300px, var(--c) 2.300px 3.300px, transparent 3.300px 5.660px); }
.palette .bs { --g: repeating-linear-gradient(45deg, transparent 0 2.300px, var(--c) 2.300px 3.300px, transparent 3.300px 5.660px); }
.palette .fs.thick { --g: repeating-linear-gradient(-45deg, transparent 0 2px, var(--c) 2px 3.600px, transparent 3.600px 5.660px); }
.palette .bs.thick { --g: repeating-linear-gradient(45deg, transparent 0 2px, var(--c) 2px 3.600px, transparent 3.600px 5.660px); }
.palette .hl { --g: repeating-linear-gradient(transparent 0 3px, #4448 3px 4px); box-shadow: inset 0 0 0 1px #dedede, inset -1px 0 0 1px #5555; }
.palette .dots { background: conic-gradient(from 270deg at 2px 2px, var(--c) 90deg, transparent 0) 2px 2px / 4px 8px, conic-gradient(from 270deg at 2px 2px, var(--c) 90deg, transparent 0) 0 6px / 4px 8px, var(--b); }
.palette .white.dots { background: conic-gradient(from 270deg at 2px 2px, #fff 90deg, transparent 0) 3px 3px / 4px 4px, var(--b); }
.palette .x, .palette .xd { box-shadow: inset 0 0 0 1px #dedede, inset 0 0 0 2px #3338; background: linear-gradient(45deg, transparent 48%, #222 48% 52%, transparent 52%), linear-gradient(-45deg, transparent 48%, #222 48% 52%, transparent 52%), var(--b); }
.palette .xd { background: linear-gradient(45deg, transparent 48%, #222 48% 52%, transparent 52%), linear-gradient(-45deg, transparent 48%, #222 48% 52%, transparent 52%), conic-gradient(from 270deg at 2px 2px, #4c8ce0 90deg, transparent 0) 2px 2px / 4px 4px, var(--b); }
.palette .dfs { background: repeating-linear-gradient(-45deg, transparent 0 2.300px, #222 2.300px 3.300px, transparent 3.300px 5.660px), conic-gradient(from 270deg at 2px 2px, #c8c8c8 90deg, transparent 0) 2px 2px / 4px 4px, var(--b); }
.palette .dbs { background: repeating-linear-gradient(45deg, transparent 0 2.300px, #222 2.300px 3.300px, transparent 3.300px 5.660px), conic-gradient(from 270deg at 2px 2px, #4bd04b 90deg, transparent 0) 2px 2px / 5px 5px, var(--b); }
.palette .tri { background: conic-gradient(from -45deg at 4px 4px, #0a64ff 90deg, transparent 0) 1px 1px / 8px 8px, conic-gradient(from -45deg at 4px 4px, #0a64ff 90deg, transparent 0) 5px 5px / 8px 8px, var(--b); box-shadow: inset 0 0 0 1px #dedede, inset 0 0 0 2px #0a64ff99; }
.palette .vtri { background: conic-gradient(from 225deg at 4px 4px, #8a00c8 90deg, transparent 0) 1px 1px / 8px 8px, conic-gradient(from 225deg at 4px 4px, #8a00c8 90deg, transparent 0) 5px 5px / 8px 8px, var(--b); box-shadow: inset 0 0 0 1px #dedede, inset 0 0 0 2px #8a00c888; }
.palette .brick { background: repeating-linear-gradient(transparent 0 3px, #6668 3px 4px), conic-gradient(from 270deg at 3px 2px, #c88 90deg, transparent 0) 2px 2px / 6px 6px, var(--b); }

.cellmgr { left: 166px; top: 307px; width: 415px; height: 297px; border-radius: 8px 8px 0 0; box-shadow: 0 0 0 1px rgba(60, 60, 60, .6), 0 4px 20px rgba(0, 0, 0, .55); }
.cellmgr .title { background: #322f30; }
.tools { height: 31px; flex: none; display: flex; gap: 2px; padding: 1px 1px 1px 1px; }
.tb { height: 29px; border: 1px solid; border-color: #fff #828282 #828282 #fff; text-align: center; line-height: 27px; }
.tb.hot { background: #ececec; }
.tb.last { margin-left: auto; }
.w57 { width: 57px; } .w51 { width: 51px; } .w74 { width: 74px; } .w64 { width: 64px; }
.tree { height: 202px; flex: none; display: flex; border-top: 1px solid #828282; padding-left: 1px; }
.rows { width: 400px; background: #fff; margin-right: 1px; }
.row { height: 20px; line-height: 19px; display: grid; grid-template-columns: 165px 1fr; padding-left: 39px; }
.row.root { display: flex; align-items: flex-start; gap: 5px; padding-left: 2px; line-height: 18px; letter-spacing: 0.350px; }
.row.root svg { margin-top: 9px; }
.row.sel { background: #4a6984; color: #fff; }
.target { flex: 1; display: flex; align-items: center; padding-left: 4px; }
.target span:first-child { width: 110px; }
```
